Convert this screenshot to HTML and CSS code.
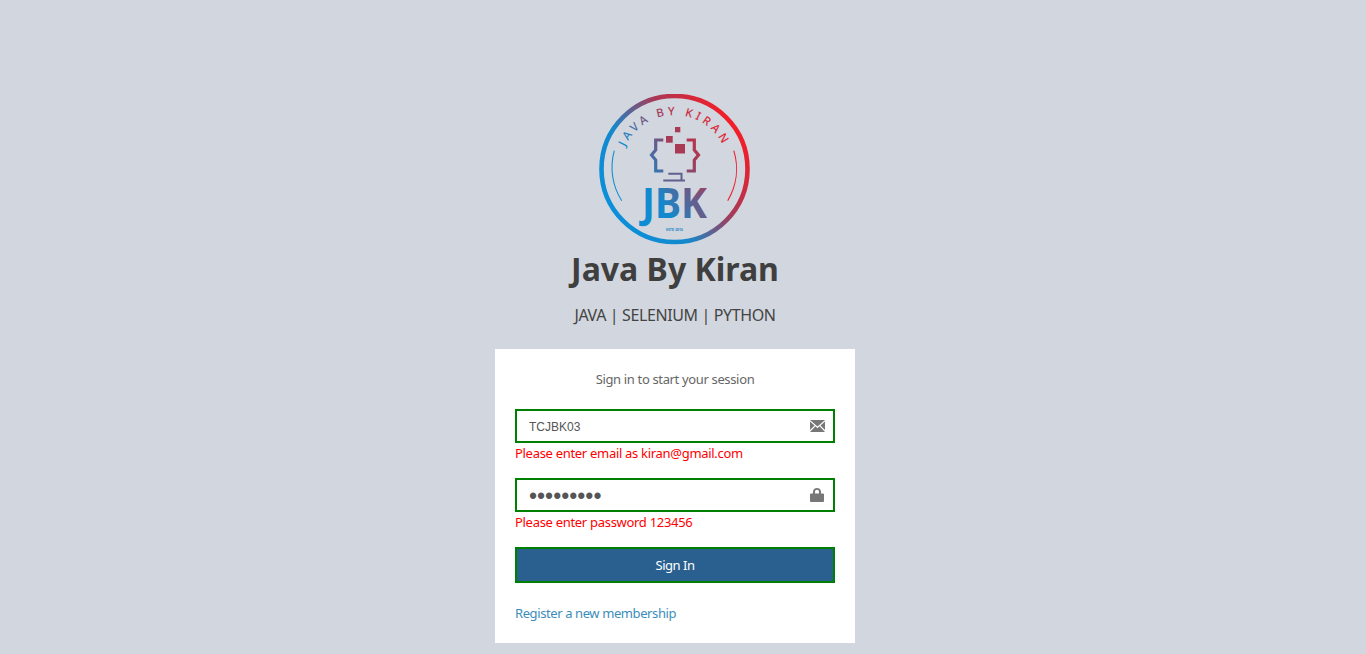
FILE: index.html
```html
<!DOCTYPE html>
<html lang="en">

<head>
    <meta charset="UTF-8">
    <meta name="viewport" content="width=device-width, initial-scale=1.0">
    <title>Java By Kiran - Sign In</title>
    <link rel="stylesheet" href="styles.css">
</head>

<body>
    <div class="login-box">
        <!-- Logo -->
        <svg class="logo" viewBox="9 9 152 152" role="img" aria-label="JBK logo">
            <defs>
                <linearGradient id="jbkGrad" gradientUnits="userSpaceOnUse" x1="25" y1="125" x2="145" y2="45">
                    <stop offset="0" stop-color="#0b8fd8"/>
                    <stop offset="0.3" stop-color="#1488cc"/>
                    <stop offset="0.65" stop-color="#a63a58"/>
                    <stop offset="1" stop-color="#f01f2a"/>
                </linearGradient>
                <path id="textArc" d="M30.5,84 A54,54 0 0 1 138.5,84"/>
            </defs>
            <circle cx="84.5" cy="84" r="73" fill="none" stroke="url(#jbkGrad)" stroke-width="4.6"/>
            <path d="M24.3,65.7 A62,62 0 0 0 31.7,115.7" fill="none" stroke="#0e8fd6" stroke-width="1.1"/>
            <path d="M143.8,65.7 A62,62 0 0 1 137.7,115.7" fill="none" stroke="#ee2030" stroke-width="1.1"/>
            <text class="logo-arc" fill="url(#jbkGrad)"><textPath href="#textArc" startOffset="50%" text-anchor="middle">JAVA BY KIRAN</textPath></text>
            <path d="M73.3,55 H65.7 V65 L61.5,70 L65.7,75 V86 H73.3" fill="none" stroke="url(#jbkGrad)" stroke-width="3.2"/>
            <path d="M96.7,55 H104.3 V65 L108.5,70 L104.3,75 V86 H96.7" fill="none" stroke="url(#jbkGrad)" stroke-width="3.2"/>
            <rect x="76" y="51" width="6.7" height="6.7" fill="#a83a55"/>
            <rect x="85" y="59" width="10" height="9.5" fill="#a83a55"/>
            <rect x="85" y="42" width="5.3" height="5.3" fill="#a83a55"/>
            <path d="M78.3,88.7 H91.5 V95 M73.3,95.4 H95" fill="none" stroke="#5f5f90" stroke-width="2"/>
            <text class="logo-jbk" x="52" y="132.7" textLength="65" lengthAdjust="spacingAndGlyphs" fill="url(#jbkGrad)">JBK</text>
            <text class="logo-estd" x="84.5" y="146" text-anchor="middle">ESTD 2016</text>
        </svg>

        <h1 class="brand">Java By Kiran</h1>
        <p class="tagline">JAVA | SELENIUM | PYTHON</p>

        <form class="login-card">
            <p class="login-msg">Sign in to start your session</p>

            <div class="form-group">
                <div class="input-wrap">
                    <input type="text" class="form-control" value="TCJBK03">
                    <svg class="input-icon" viewBox="0 0 15 12">
                        <path d="M0,0 H15 L7.5,6.6 Z M0,1.6 L4.6,5.6 L0,10 Z M15,1.6 V10 L10.4,5.6 Z M5.4,6.3 L7.5,8.2 L9.6,6.3 L15,12 H0 Z"/>
                    </svg>
                </div>
                <div class="error">Please enter email as kiran@gmail.com</div>
            </div>

            <div class="form-group">
                <div class="input-wrap">
                    <input type="password" class="form-control pass" value="123456789">
                    <svg class="input-icon lock" viewBox="0 0 14 14">
                        <path d="M3,5.5 V3.8 C3,1.5 4.8,0 7,0 C9.2,0 11,1.5 11,3.8 V5.5 H13 A1,1 0 0 1 14,6.5 V13 A1,1 0 0 1 13,14 H1 A1,1 0 0 1 0,13 V6.5 A1,1 0 0 1 1,5.5 Z M5,5.5 H9 V3.8 C9,2.6 8.2,1.8 7,1.8 C5.8,1.8 5,2.6 5,3.8 Z" fill-rule="evenodd"/>
                    </svg>
                </div>
                <div class="error">Please enter password 123456</div>
            </div>

            <button type="button" class="btn-signin">Sign In</button>
            <a href="#" class="register">Register a new membership</a>
        </form>
    </div>
</body>

</html>
```

FILE: styles.css
```css
body {
    margin: 0;
    background-color: #d2d6de;
    font-family: "Noto Sans", sans-serif;
    color: #444;
}

.login-box {
    width: 360px;
    margin-left: 495px;
    padding-top: 94px;
    display: flex;
    flex-direction: column;
    align-items: center;
}

.logo {
    width: 152px;
    height: 152px;
    display: block;
}

.logo-arc {
    font-family: "Noto Sans", sans-serif;
    font-size: 11.5px;
    font-weight: 500;
    letter-spacing: 3.4px;
}

.logo-jbk {
    font-family: "Noto Sans", sans-serif;
    font-size: 41px;
    font-weight: 700;
}

.logo-estd {
    font-family: "Noto Sans", sans-serif;
    font-size: 3.4px;
    font-weight: 700;
    fill: #1b86c8;
}

.brand {
    margin: 2px 0 0;
    font-size: 32px;
    line-height: 42px;
    font-weight: 700;
    color: #3f3f3f;
}

.tagline {
    margin: 14px 0 0;
    font-size: 16px;
    line-height: 22px;
    letter-spacing: -0.38px;
    color: #444;
}

.login-card {
    width: 320px;
    margin-top: 23px;
    padding: 20px;
    background-color: #fff;
    display: flex;
    flex-direction: column;
}

.login-msg {
    margin: 0 0 20px;
    text-align: center;
    font-size: 13px;
    line-height: 20px;
    letter-spacing: -0.35px;
    color: #666;
}

.form-group {
    margin-bottom: 15px;
}

.input-wrap {
    position: relative;
}

.form-control {
    display: block;
    width: 100%;
    height: 34px;
    box-sizing: border-box;
    padding: 7px 12px 5px;
    border: 2px solid green;
    border-radius: 0;
    background-color: #fff;
    font-family: "Liberation Sans", Arial, sans-serif;
    font-size: 12px;
    color: #555;
    outline: none;
}

.pass {
    font-size: 23px;
}

.input-icon {
    position: absolute;
    top: 11px;
    right: 10px;
    width: 15px;
    height: 12px;
    fill: #777;
}

.input-icon.lock {
    top: 10px;
    right: 11px;
    width: 14px;
    height: 14px;
}

.error {
    font-size: 13px;
    line-height: 20px;
    letter-spacing: -0.3px;
    color: red;
}

.btn-signin {
    height: 36px;
    margin-bottom: 20px;
    border: 2px solid green;
    background-color: #2a6090;
    color: #fff;
    font-family: "Noto Sans", sans-serif;
    font-size: 13px;
    letter-spacing: -0.5px;
}

.register {
    font-size: 13px;
    line-height: 20px;
    letter-spacing: -0.4px;
    color: #3c8dbc;
    text-decoration: none;
}
```
